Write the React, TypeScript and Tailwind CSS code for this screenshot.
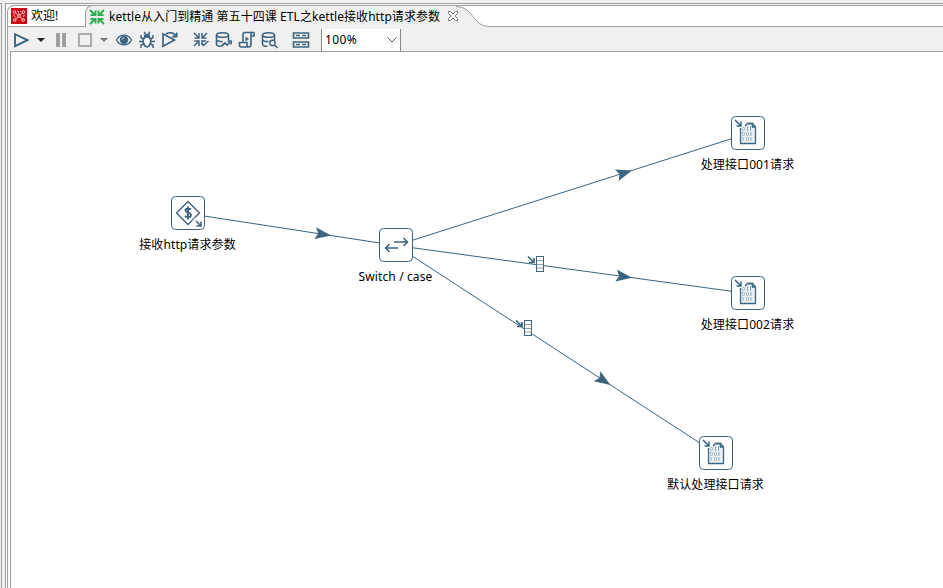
import React from "react";

const INK = "#3d6480";

interface IconProps {
  children: React.ReactNode;
  width?: number;
  height?: number;
  className?: string;
}

const Icon: React.FC<IconProps> = ({ children, width = 18, height = 18, className = "" }) => (
  <svg
    width={width}
    height={height}
    viewBox={`0 0 ${width} ${height}`}
    fill="none"
    stroke={INK}
    strokeWidth={1.6}
    className={`block shrink-0 ${className}`}
  >
    {children}
  </svg>
);

const KettleLogo = () => (
  <svg width="16" height="16" viewBox="0 0 16 16" className="block shrink-0" fill="none" stroke="#f6c9cb" strokeWidth="1">
    <rect width="16" height="16" fill="#cc0a14" stroke="none" />
    <path d="M4.500 5 7 7M11.500 5 9 7M7 9l-2.500 2M9 9l2.500 2M6 3.500h1.500L8 6M10 3.500H9M3 6.500V8l1.500 1M13 6.500V8l-1.500 1" strokeWidth=".9" />
    <circle cx="3.500" cy="4" r="1.300" />
    <circle cx="12.300" cy="4" r="1.300" />
    <circle cx="3.800" cy="12" r="1.300" />
    <circle cx="12.200" cy="12" r="1.300" />
    <circle cx="8" cy="8" r="1.300" />
  </svg>
);

const TransformationLogo = () => (
  <svg width="16" height="16" viewBox="0 0 16 16" className="block shrink-0" fill="none" stroke="#26b04f" strokeWidth="2">
    <path d="M1 1l5 5M1.500 6h5V1.500M15 1l-5 5M14.500 6h-5V1.500M1 15l5-5M1.500 10h5v4.500M15 15l-5-5M14.500 10h-5v4.500" />
  </svg>
);

const Database = () => (
  <>
    <ellipse cx="7.500" cy="4" rx="6" ry="2.300" />
    <path d="M1.500 4v9c0 1.400 2 2.300 5 2.300M13.500 4v5M1.500 8.300c0 1.500 3 2.300 6 2.300" />
  </>
);

const Toolbar = () => (
  <div className="flex h-[24px] shrink-0 items-center bg-[#f0f0f0] pt-px pl-[5px]">
    <Icon width={16} height={16}>
      <path d="M2 2.200v12L14.500 8.200z" strokeWidth={1.900} />
    </Icon>
    <svg width="8" height="4" className="ml-[8px] block"><path d="M0 0h8L4 4z" fill="#222" /></svg>
    <svg width="10" height="14" className="ml-[11px] block"><path d="M0 0h4v14H0zM6 0h4v14H6z" fill="#a0a0a0" /></svg>
    <svg width="14" height="14" className="ml-[12px] block"><rect x="1" y="1" width="12" height="12" fill="none" stroke="#a0a0a0" strokeWidth="1.700" /></svg>
    <svg width="8" height="4" className="ml-[8px] block"><path d="M0 0h8L4 4z" fill="#777" /></svg>
    <Icon className="ml-[7px]">
      <path d="M1.500 9C5 2.500 13 2.500 16.500 9 13 15.500 5 15.500 1.500 9z" strokeWidth={1.300} />
      <circle cx="9" cy="9" r="4.200" fill={INK} stroke="none" />
      <path d="M7 8.500a2 2 0 0 1 2-1.800" stroke="#d5e0e8" strokeWidth={1} />
    </Icon>
    <Icon className="ml-[5px]">
      <path d="M9 6c-2.800 0-3.800 2-3.800 4s1.300 6 3.800 6 3.800-4 3.800-6-1-4-3.800-4z" fill="#fff" strokeWidth={1.700} />
      <path d="M5.800 6C5.800 3.700 7 2.800 9 2.800s3.200.9 3.200 3.200z" fill={INK} stroke="none" />
      <path d="M6.200 1l1.300 2M11.800 1l-1.300 2M5.500 8 3 6.500V4M5 10.500H1M5.500 13 3 14v3M12.500 8 15 6.500V4M13 10.500h4M12.500 13l2.500 1v3" strokeWidth={1.500} />
    </Icon>
    <Icon className="ml-[5px]">
      <path d="M2 2.800v12.500l11.500-6.300zM5 3C8.500.8 13 1.500 15 5M15.700 1.500v4.200h-4.500" strokeWidth={1.700} />
    </Icon>
    <Icon className="ml-[13px]">
      <path d="M2 2l5 5M2.500 7H7V2M15 2l-5 5M14.500 7H10V2M2 15l5-5M2.500 10H7v5M10 14v-4h4M10 13l1.500 1.500L16.500 10" strokeWidth={1.500} />
    </Icon>
    <Icon className="ml-[5px]">
      <Database />
      <path d="M6.500 15l3.500-3 2 2 4-4M12.500 10H16v3.500" strokeWidth={1.700} />
    </Icon>
    <Icon className="ml-[5px]">
      <path d="M5 11V4c0-2 1-2.500 2-2.500h9V5h-3v8c0 2-1 3-2.500 3H3.500C2 16 1.500 15 1.500 14v-2.500H9V14c0 1 .5 2 1.500 2M13 5V1.500" />
      <path d="M7.500 5.500v5L11 8z" fill={INK} stroke="none" />
    </Icon>
    <Icon className="ml-[5px]">
      <Database />
      <circle cx="11.500" cy="12" r="2.700" strokeWidth={1.400} />
      <path d="M13.500 14l3 3" />
    </Icon>
    <Icon className="ml-[13px]">
      <path d="M1.500 2h15v5h-15zM1.500 11h15v5h-15z" />
      <path d="M4 4.500h4M10 4.500h4M4 13.500h4M10 13.500h4" strokeWidth={1.300} />
    </Icon>
    <div className="ml-[11px] flex h-[22px] w-[80px] items-center justify-between self-end border-x border-[#8a8a8a] bg-white pr-[3px] pl-[3px]">
      <span className="text-[12px] leading-[20px] tracking-[0.4px]">100%</span>
      <svg width="10" height="6" fill="none" stroke="#555" className="block"><path d="M.5.500 5 5 9.500.500" /></svg>
    </div>
  </div>
);

const TabBar = () => (
  <div className="flex h-[22px] shrink-0 rounded-tl-[7px] border-t border-[#a0a0a0] bg-white">
    <div className="flex w-[77px] shrink-0 items-center gap-[4px] border-b border-[#a0a0a0] pl-[3px]">
      <KettleLogo />
      <span className="text-[12px] leading-[18px] whitespace-nowrap">欢迎!</span>
    </div>
    <div className="relative -mt-px flex w-[371px] shrink-0 items-center rounded-tl-[8px] border-t border-l border-[#a0a0a0] bg-[#f0f0f0] pl-[3px]">
      <TransformationLogo />
      <span className="ml-[4px] text-[12px] leading-[18px] tracking-[0.06px] whitespace-nowrap">
        kettle从入门到精通 第五十四课 ETL之kettle接收http请求参数
      </span>
      <svg width="12" height="12" viewBox="0 0 12 12" className="absolute top-[4px] left-[361px] block" fill="#fff" stroke="#777">
        <path d="M1.500 1.500h2L6 4l2.500-2.500h2v2L8 6l2.500 2.500v2h-2L6 8l-2.500 2.500h-2v-2L4 6 1.500 3.500z" />
      </svg>
    </div>
    <svg width="33" height="21" className="block shrink-0">
      <path d="M0 0C18 0 16 20.500 33 20.500V21H0z" fill="#f0f0f0" />
      <path d="M0 .5C18 .5 16 20.500 33 20.500" fill="none" stroke="#a0a0a0" />
    </svg>
    <div className="flex-1 border-b border-[#a0a0a0]" />
  </div>
);

const SwitchIcon = () => (
  <path d="M15 14h13M24.500 10l4 4-4 4M19 20H6.500M10.500 16l-4 4 4 4" strokeWidth={1.500} />
);

const RequestIcon = () => (
  <>
    <path d="M4 4l5.500 5.500M5.500 10H10V5.500" strokeWidth={1.500} />
    <path d="M9.500 12v15.500h15V11l-3-3.500h-5L14 10" fill="#e8f0f4" strokeWidth={1.300} />
    <path d="M17 7.500h4.500V11h3" strokeWidth={1.500} />
    <g stroke="#8fabbc" strokeWidth={1} fill="#f4f8fa">
      <rect x="11.500" y="11.500" width="2" height="3" rx="1" />
      <path d="M16.500 10v5M19.500 10v5" />
      <rect x="11.500" y="16.500" width="2" height="3" rx="1" />
      <rect x="15.500" y="16.500" width="2" height="3" rx="1" />
      <path d="M20 16v4M12 21v4M20 21v4" />
      <rect x="15.500" y="21.500" width="2" height="3" rx="1" />
    </g>
  </>
);

const ParamsIcon = () => (
  <>
    <path d="M17 5.500 28.500 17 17 28.500 5.500 17z" strokeWidth={1.400} />
    <path d="M20 13.500c-1-1-5.500-1.500-5.500 1s5.500 1.800 5.500 4.500-4.500 2.500-6 1M17 10.500v13" strokeWidth={1.900} />
    <path d="M23 23l7 7" stroke="#fff" strokeWidth={4} />
    <path d="M25 25l5 5M25.500 30H30v-4.500" strokeWidth={1.600} />
  </>
);

interface StepNode {
  label: string;
  x: number;
  y: number;
  icon: React.ReactNode;
}

// node centres, relative to the canvas
const steps: StepNode[] = [
  { label: "接收http请求参数", x: 177, y: 161, icon: <ParamsIcon /> },
  { label: "Switch / case", x: 385, y: 193, icon: <SwitchIcon /> },
  { label: "处理接口001请求", x: 737, y: 81, icon: <RequestIcon /> },
  { label: "处理接口002请求", x: 737, y: 241, icon: <RequestIcon /> },
  { label: "默认处理接口请求", x: 705, y: 401, icon: <RequestIcon /> },
];

const hops = [
  { from: 0, to: 1, tip: 320 },
  { from: 1, to: 2, tip: 621 },
  { from: 1, to: 3, tip: 621 },
  { from: 1, to: 4, tip: 599.5 },
];

const targets = [
  { x: 517, y: 204 },
  { x: 505, y: 268 },
];

const Canvas = () => (
  <div className="relative flex-1 overflow-hidden bg-white">
    <svg width="932" height="536" className="absolute top-0 left-0 block">
      {hops.map(({ from, to, tip }) => {
        const a = steps[from];
        const b = steps[to];
        const slope = (b.y - a.y) / (b.x - a.x);
        const angle = (Math.atan(slope) * 180) / Math.PI;
        const tipY = a.y + 0.5 + (tip - a.x) * slope;
        return (
          <g key={to}>
            <line x1={a.x} y1={a.y + 0.5} x2={b.x} y2={b.y + 0.5} stroke={INK} />
            <path d="M0 0-16-6-13 0-16 6z" fill={INK} transform={`translate(${tip} ${tipY}) rotate(${angle})`} />
          </g>
        );
      })}
      {targets.map((t) => (
        <g key={t.x} transform={`translate(${t.x} ${t.y})`} fill="none" stroke={INK}>
          <path d="M0 .5l5 5M1 6.500h5V2" strokeWidth="1.700" />
          <rect x="8.500" y=".5" width="7" height="15" fill="#fff" />
          <path d="M9 4.500h6M9 8.500h6M9 12h6" stroke="#88a2b5" />
        </g>
      ))}
    </svg>
    {steps.map((s) => (
      <div
        key={s.label}
        className="absolute flex w-[120px] -translate-x-1/2 flex-col items-center"
        style={{ left: s.x, top: s.y - 17 }}
      >
        <svg width="34" height="34" viewBox="0 0 34 34" className="block" fill="none" stroke={INK}>
          <rect x=".5" y=".5" width="33" height="33" rx="4" fill="#fff" />
          {s.icon}
        </svg>
        <span className="mt-[6px] pr-px text-[12px] leading-[18px] tracking-[0.12px] whitespace-nowrap">{s.label}</span>
      </div>
    ))}
  </div>
);

const App = () => (
  <div className="flex h-[588px] w-[943px] overflow-hidden bg-[#f0f0f0] pt-[3px] font-['Noto_Sans','Noto_Sans_CJK_SC',sans-serif] text-black">
    <div className="w-[2px] border-t border-r border-[#a0a0a0]" />
    <div className="ml-[3px] flex flex-1 border-t border-l border-[#a0a0a0] bg-[#f8f8f8] pt-px pl-px">
      <div className="flex flex-1 flex-col rounded-tl-[7px] border-l border-[#a0a0a0]">
        <TabBar />
        <Toolbar />
        <div className="ml-[2px] flex flex-1 border-t border-l border-[#a0a0a0]">
          <Canvas />
        </div>
      </div>
    </div>
  </div>
);

export default App;
